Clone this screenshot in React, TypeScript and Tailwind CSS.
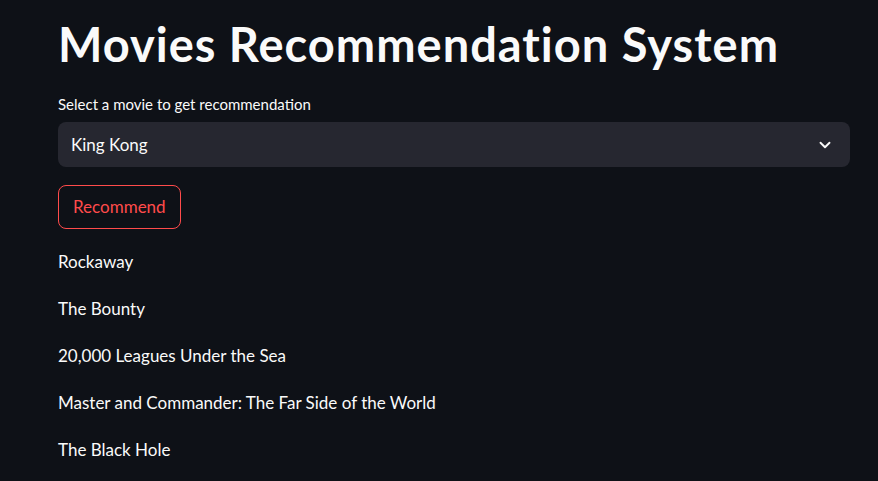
import { ChevronDown } from 'lucide-react'

const recs = [
  'Rockaway',
  'The Bounty',
  '20,000 Leagues Under the Sea',
  'Master and Commander: The Far Side of the World',
  'The Black Hole',
]

export default function App() {
  return (
    <div className="w-full h-[481px] overflow-hidden bg-[#0e1117] text-[#fafafa] font-['Lato',sans-serif]">
      <div className="px-[58px] pt-[14px] pr-[28px]">
        <h1 className="text-[47px] font-bold leading-[60px] tracking-[1px]">Movies Recommendation System</h1>

        <label className="block mt-[20px] text-[15px] leading-[20px]">Select a movie to get recommendation</label>
        <div className="mt-[8px] h-[45px] rounded-[8px] bg-[#262730] flex items-center justify-between pl-[13px] pr-[16px]">
          <span className="text-[17px]">King Kong</span>
          <ChevronDown size={18} strokeWidth={2.5} />
        </div>

        <button className="mt-[18px] h-[44px] px-[14px] rounded-[8px] border border-[#ff4b4b] text-[#ff4b4b] text-[17px]">
          Recommend
        </button>

        <div className="mt-[9px] flex flex-col">
          {recs.map(r => (
            <p key={r} className="h-[47px] flex items-center text-[17px]">{r}</p>
          ))}
        </div>
      </div>
    </div>
  )
}
